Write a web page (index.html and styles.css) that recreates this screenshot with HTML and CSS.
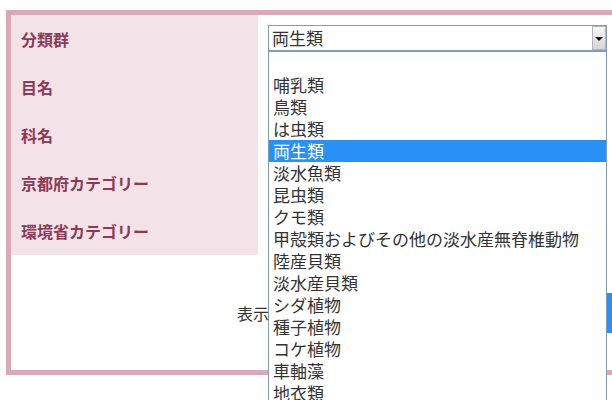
FILE: index.html
```html
<!DOCTYPE html>
<html lang="ja">
<head>
  <meta charset="UTF-8" />
  <title>検索 | 京都府レッドデータブック</title>
  <meta name="viewport" content="width=device-width, initial-scale=1.0" />
  <link rel="stylesheet" href="styles.css">
</head>
<body>
  <div class="panel">
    <table class="search">
      <tr>
        <th>分類群</th>
        <td>
          <div class="select">
            <span class="select-value">両生類</span>
            <span class="select-arrow"></span>
            <!-- 開いた状態のリスト -->
            <ul class="select-list">
              <li>&nbsp;</li>
              <li>哺乳類</li>
              <li>鳥類</li>
              <li>は虫類</li>
              <li class="selected">両生類</li>
              <li>淡水魚類</li>
              <li>昆虫類</li>
              <li>クモ類</li>
              <li>甲殻類およびその他の淡水産無脊椎動物</li>
              <li>陸産貝類</li>
              <li>淡水産貝類</li>
              <li>シダ植物</li>
              <li>種子植物</li>
              <li>コケ植物</li>
              <li>車軸藻</li>
              <li>地衣類</li>
            </ul>
          </div>
        </td>
      </tr>
      <tr><th>目名</th><td></td></tr>
      <tr><th>科名</th><td></td></tr>
      <tr><th>京都府カテゴリー</th><td></td></tr>
      <tr><th>環境省カテゴリー</th><td></td></tr>
    </table>

    <div class="actions">
      <span class="count-label">表示件数</span>
      <button>検索</button>
    </div>
  </div>
</body>
</html>
```

FILE: styles.css
```css
html {
  overflow: hidden;
}

body {
  margin: 0;
  padding-top: 10px;
  min-height: 400px;
  box-sizing: border-box;
  font-family: "Noto Sans CJK JP", "Noto Sans", sans-serif;
  background: #fff;
  color: #333;
}

.panel {
  margin-left: 6px;
  width: 660px;
  border: 5px solid #d9a9b7;
  background: #fff;
}

.search {
  border-collapse: collapse;
  width: 100%;
}

.search th {
  width: 237px;
  height: 48px;
  padding: 0 0 0 10px;
  background: #f3e2e7;
  color: #8b3a57;
  font-size: 16px;
  font-weight: bold;
  text-align: left;
  vertical-align: middle;
}

.search td {
  padding: 0 0 0 10px;
  vertical-align: top;
}

.select {
  position: relative;
  width: 337px;
  height: 24px;
  margin-top: 10px;
  border: 1px solid #7f9db9;
  background: #fff;
  font-size: 17px;
  line-height: 24px;
}

.select-value {
  padding-left: 3px;
}

.select-arrow {
  position: absolute;
  top: 0;
  right: 0;
  width: 12px;
  height: 22px;
  border: 1px solid #b5b5b5;
  background: linear-gradient(#f6f6f6, #d6d6d6);
}

.select-arrow::after {
  content: "";
  position: absolute;
  top: 10px;
  left: 2px;
  border-left: 4px solid transparent;
  border-right: 4px solid transparent;
  border-top: 4px solid #111;
}

.select-list {
  position: absolute;
  top: 25px;
  left: -1px;
  width: 337px;
  margin: 0;
  padding: 0;
  list-style: none;
  border: 1px solid #7f9db9;
  background: #fff;
  z-index: 10;
}

.select-list li {
  height: 22px;
  line-height: 22px;
  padding-left: 4px;
  color: #333;
  white-space: nowrap;
}

.select-list li.selected {
  background: #2990f5;
  color: #fff;
}

.actions {
  display: flex;
  align-items: center;
  gap: 306px;
  height: 115px;
  padding-left: 226px;
  font-size: 16px;
}

.count-label {
  flex-shrink: 0;
  white-space: nowrap;
}

.actions button {
  flex-shrink: 0;
  height: 40px;
  padding: 0 24px;
  background: #2990f5;
  color: #fff;
  border: none;
  font-family: inherit;
  font-size: 16px;
  white-space: nowrap;
}
```
